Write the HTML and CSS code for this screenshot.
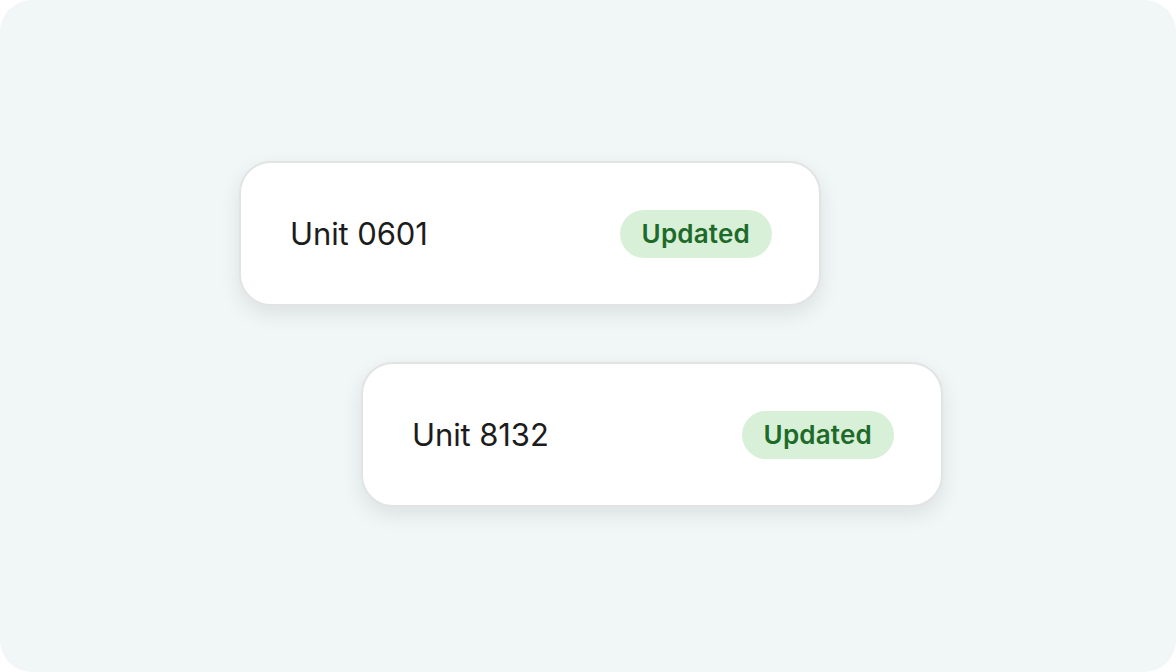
FILE: index.html
```html
<!DOCTYPE html>
<html lang="en">
<head>
  <meta charset="UTF-8" />
  <title>Units</title>
  <meta name="viewport" content="width=device-width, initial-scale=1.0" />
  <link rel="stylesheet" href="styles.css">
</head>
<body>

  <div class="panel">
    <div class="unit-card">
      <span class="unit-name">Unit 0601</span>
      <span class="status-badge">Updated</span>
    </div>

    <div class="unit-card unit-card--shifted">
      <span class="unit-name">Unit 8132</span>
      <span class="status-badge">Updated</span>
    </div>
  </div>

</body>
</html>
```

FILE: styles.css
```css
body {
  margin: 0;
  background-color: #ffffff;
  font-family: Inter, "Liberation Sans", Arial, sans-serif;
}

.panel {
  box-sizing: border-box;
  width: 1176px;
  height: 672px;
  border-radius: 32px;
  background-color: #f1f6f6;
  padding: 161px 0 0 239px;
  display: flex;
  flex-direction: column;
  align-items: flex-start;
  gap: 56px;
}

.unit-card {
  box-sizing: border-box;
  flex-shrink: 0;
  width: 582px;
  height: 145px;
  padding: 0 47px 0 49px;
  background-color: #ffffff;
  border: 2px solid #e2e4e4;
  border-radius: 32px;
  box-shadow: 0 8px 20px rgba(40, 60, 60, 0.10);
  display: flex;
  align-items: center;
  justify-content: space-between;
}

.unit-card--shifted {
  margin-left: 122px;
}

.unit-name {
  font-size: 31px;
  color: #1c1c1c;
  letter-spacing: -0.1px;
}

.status-badge {
  box-sizing: border-box;
  height: 48px;
  padding: 0 22px;
  display: flex;
  align-items: center;
  border-radius: 24px;
  background-color: #d8f0d8;
  color: #1d6a2a;
  font-size: 26px;
  font-weight: 600;
  letter-spacing: 0.2px;
}
```
